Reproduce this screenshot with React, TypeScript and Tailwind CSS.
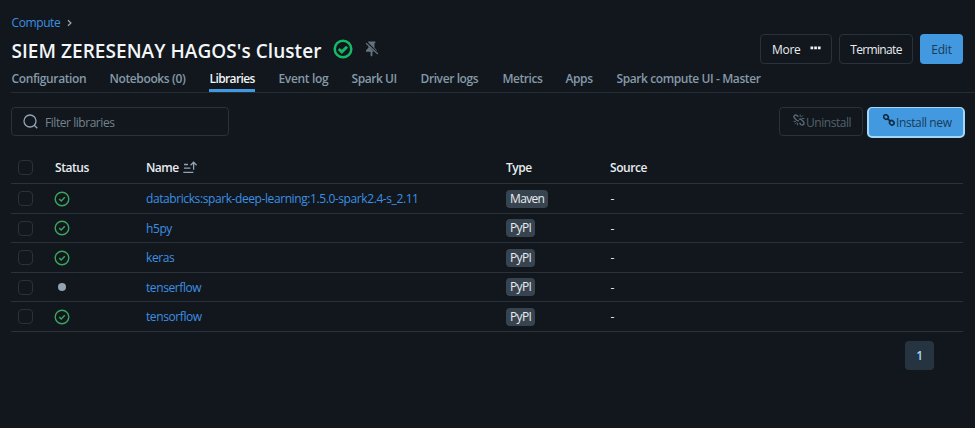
import React from "react";

const tabs = [
  { label: "Configuration", box: "w-[98px]", tracking: "tracking-[-0.38px]" },
  { label: "Notebooks (0)", box: "w-[100px]", tracking: "tracking-[-0.38px]" },
  { label: "Libraries", box: "w-[69px]", tracking: "tracking-[-0.6px]" },
  { label: "Event log", box: "w-[73px]", tracking: "tracking-[-0.35px]" },
  { label: "Spark UI", box: "w-[69px]", tracking: "tracking-[-0.45px]" },
  { label: "Driver logs", box: "w-[82px]", tracking: "tracking-[-0.4px]" },
  { label: "Metrics", box: "w-[63px]", tracking: "tracking-[-0.45px]" },
  { label: "Apps", box: "w-[51px]", tracking: "tracking-[-0.4px]" },
  { label: "Spark compute UI - Master", box: "w-[160px]", tracking: "tracking-[-0.41px]" },
];

const libraries = [
  { name: "databricks:spark-deep-learning:1.5.0-spark2.4-s_2.11", type: "Maven", installed: true, height: "h-[30px]" },
  { name: "h5py", type: "PyPI", installed: true, height: "h-[29px]" },
  { name: "keras", type: "PyPI", installed: true, height: "h-[30px]" },
  { name: "tenserflow", type: "PyPI", installed: false, height: "h-[29px]" },
  { name: "tensorflow", type: "PyPI", installed: true, height: "h-[30px]" },
];

function Checkbox() {
  return <span className="ml-[7px] block h-[15px] w-[15px] shrink-0 rounded-[4px] border border-[#28323a]" />;
}

function Installed() {
  return (
    <svg width="16" height="16" viewBox="0 0 16 16" fill="none" stroke="#3ba65e" strokeWidth="1.4">
      <circle cx="8" cy="8" r="6.8" />
      <path d="M5.2 8.1l2 1.9 3.6-3.7" />
    </svg>
  );
}

function RunningBadge() {
  return (
    <svg width="20" height="20" viewBox="0 0 20 20" fill="none" stroke="#14b866">
      <circle cx="10" cy="10" r="8.3" strokeWidth="2.5" />
      <path d="M5.8 10l3 2.9 5.3-5.2" strokeWidth="2.9" />
    </svg>
  );
}

function Unpinned() {
  return (
    <svg width="14" height="16" viewBox="0 0 14 16" fill="#66737e">
      <path d="M3.2 0.5h7.1v1.7h-.9v4.2l2.4 2.8v.9L3.2 1.6z" />
      <path d="M3.4 5.1v1.6L1 9.2v1.5h4.6v4.1l.9.8.9-.8v-4.1h1.4z" />
      <path d="M1.1 2.2l11.8 10.7" stroke="#66737e" strokeWidth="1.3" />
    </svg>
  );
}

function ChainLink() {
  return (
    <svg width="12" height="12" viewBox="0 0 12 12" fill="none" stroke="#112b40" strokeWidth="1.6">
      <rect x="-2.4" y="-2" width="4.8" height="4" rx="2" transform="translate(3 3) rotate(45)" />
      <rect x="-2.4" y="-2" width="4.8" height="4" rx="2" transform="translate(8.8 8.8) rotate(45)" />
      <path d="M4.4 4.4l3 3" />
    </svg>
  );
}

function BrokenLink() {
  return (
    <svg width="12" height="12" viewBox="0 0 12 12" fill="none" stroke="#5a6873" strokeWidth="1.4">
      <path d="M5.3 2.8L4.1 1.5a1.9 1.9 0 0 0-2.6 0 1.9 1.9 0 0 0 0 2.6l2.2 2.2a1.9 1.9 0 0 0 2.2.3" />
      <path d="M6.5 9.1l1.3 1.4a1.9 1.9 0 0 0 2.7 0 1.9 1.9 0 0 0 0-2.7L8.3 5.6a1.9 1.9 0 0 0-2.2-.3" />
      <path d="M7.2 2.8V.5M8.2 3.2l1.7-1.8M8.8 4.5h2.6M4.6 8.9v2.5M3.7 8.5l-1.8 1.8M3 7.4H.5" strokeWidth=".9" />
    </svg>
  );
}

function SortAscending() {
  return (
    <svg width="14" height="13" viewBox="0 0 14 13" fill="none" stroke="#92a4b3" strokeWidth="1.3">
      <path d="M1 3.5h4M1 7.1h6.4M.3 11.4h10M10.6 8.8V1.2M7.6 4.2l3-3 3 3" />
    </svg>
  );
}

export default function App() {
  return (
    <main className="h-[428px] w-[975px] overflow-hidden bg-[#11171d] pl-[11px] font-['Open_Sans','Noto_Sans',sans-serif] text-[12px] leading-[16px] tracking-[-0.45px] whitespace-nowrap text-[#e8ecf0]">
      <nav className="flex h-[31px] items-center pt-[14px] pl-[0.5px]">
        <span className="tracking-[-0.4px] text-[#3d8fe2]">Compute</span>
        <svg className="ml-[7px] mt-px" width="5" height="8" viewBox="0 0 5 8" fill="none" stroke="#92a4b3" strokeWidth="1.3">
          <path d="M1 1.2L3.9 4 1 6.8" />
        </svg>
      </nav>
      <header className="flex h-[36px] items-center pr-[12px]">
        <h1 className="w-[322px] pt-[3px] pl-[0.5px] text-[19px] leading-[26px] font-semibold tracking-[0.05px] text-[#f3f6f8]">SIEM ZERESENAY HAGOS's Cluster</h1>
        <RunningBadge />
        <span className="ml-[12px]"><Unpinned /></span>
        <div className="ml-auto flex gap-[7px]">
          <button className="flex h-[30px] w-[72px] items-center rounded-[4px] border border-[#28323a] pt-px pl-[11px] tracking-[-0.3px]">
            More
            <svg className="mb-[4px] ml-[10px]" width="11" height="4" viewBox="0 0 11 4" fill="#eef2f5">
              <path d="M.5.5h2.7v2.7H.5zM4.2.5h2.7v2.7H4.2zM7.9.5h2.7v2.7H7.9z" />
            </svg>
          </button>
          <button className="h-[30px] w-[74px] rounded-[4px] border border-[#28323a] pt-px tracking-[-0.65px]">Terminate</button>
          <button className="h-[30px] w-[43px] rounded-[4px] bg-[#4299e0] pt-px tracking-[-0.2px] text-[#183b57]">Edit</button>
        </div>
      </header>
      <div className="flex h-[26px] border-b border-[#252d35] font-semibold text-[#8699a8]">
        {tabs.map((tab) => (
          <div key={tab.label} className={tab.box}>
            <span
              className={
                tab.label === "Libraries"
                  ? `inline-block h-[25px] border-b-[3px] border-[#4299e0] pt-[4px] pl-[0.5px] text-[#f0f4f7] ${tab.tracking}`
                  : `inline-block pt-[4px] pl-[0.5px] ${tab.tracking}`
              }
            >
              {tab.label}
            </span>
          </div>
        ))}
      </div>
      <div className="mt-[14px] flex h-[32px] items-start pr-[10px]">
        <div className="flex h-[29px] w-[218px] items-center rounded-[4px] border border-[#28323a] pl-[11px] text-[#75838f]">
          <svg className="mr-[7px]" width="15" height="15" viewBox="0 0 15 15" fill="none" stroke="#92a4b3" strokeWidth="1.3">
            <circle cx="7" cy="7" r="6" />
            <path d="M11.2 11.2l3.1 3.1" />
          </svg>
          <span className="pt-[2px]">Filter libraries</span>
        </div>
        <button className="ml-auto flex h-[29px] w-[84px] items-center rounded-[4px] border border-[#28323a] pl-[13px] text-[#53616c]">
          <span className="mb-[3px]"><BrokenLink /></span>
          <span className="ml-px pt-[2px]">Uninstall</span>
        </button>
        <button className="ml-[4px] flex h-[31px] w-[98px] items-center rounded-[5px] border-2 border-t border-[#a2d8f8] bg-[#4299e0] pl-[14px] text-[#183b57]">
          <span className="mb-[4px]"><ChainLink /></span>
          <span className="ml-px pt-px tracking-[-0.4px]">Install new</span>
        </button>
      </div>
      <section className="mt-[12px] w-[952px]">
        <div className="flex h-[33px] items-center border-b border-[#293139] font-semibold">
          <Checkbox />
          <span className="ml-[22px] w-[91px] pt-px">Status</span>
          <div className="flex w-[360px] items-center gap-[4px]">
            <span className="pt-px tracking-[-0.55px]">Name</span>
            <SortAscending />
          </div>
          <span className="w-[104px] pt-px">Type</span>
          <span className="pt-px">Source</span>
        </div>
        {libraries.map((library) => (
          <div key={library.name} className={`flex items-center border-b border-[#293139] ${library.height}`}>
            <Checkbox />
            <span className="ml-[21px] w-[92px]">
              {library.installed ? <Installed /> : <span className="ml-[4px] block h-[8px] w-[8px] rounded-full bg-[#92a4b3]" />}
            </span>
            <span className="w-[360px] pt-px tracking-[-0.41px] text-[#3d8fe2]">{library.name}</span>
            <span className="flex w-[104px]">
              <span className="h-[18px] rounded-[4px] bg-[#37444f] px-[4px] leading-[18px] tracking-[-0.65px]">{library.type}</span>
            </span>
            <span className="pt-px pl-[0.5px]">-</span>
          </div>
        ))}
        <div className="flex justify-end pt-[9px] pr-[29px]">
          <button className="h-[29px] w-[29px] rounded-[4px] bg-[#253440] pt-px font-semibold text-[#a2d8f8]">1</button>
        </div>
      </section>
    </main>
  );
}
